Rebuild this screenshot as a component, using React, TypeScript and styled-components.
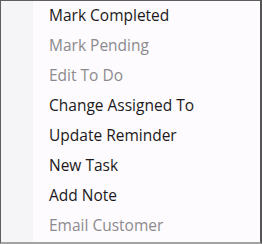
import React from "react";
import styled, { createGlobalStyle } from "styled-components";

const Global = createGlobalStyle`
  html, body { margin: 0; padding: 0; background: #ffffff; }
  body { font-family: "Open Sans", "Noto Sans", sans-serif; }
`;

const Menu = styled.div`
  box-sizing: border-box;
  width: 262px;
  height: 244px;
  display: grid;
  grid-template-columns: 32px 1fr;
  border-top: 1px solid #5e5e5e;
  border-left: 1px solid #5e5e5e;
  border-right: 2px solid #555555;
  border-bottom: 2px solid #a3a3a3;
  background: #fdfbfd;
  overflow: hidden;
`;

const Gutter = styled.div`
  background: #f5f4f6;
`;

const List = styled.ul`
  list-style: none;
  margin: -1px 0 0 0;
  padding: 0 0 0 16px;
  display: flex;
  flex-direction: column;
`;

const Item = styled.li<{ $disabled?: boolean }>`
  height: 30px;
  line-height: 30px;
  font-size: 15.5px;
  font-weight: 500;
  white-space: nowrap;
  color: ${(p) => (p.$disabled ? "#8b8a8d" : "#1c1a20")};
`;

const items: { label: string; disabled?: boolean }[] = [
  { label: "Mark Completed" },
  { label: "Mark Pending", disabled: true },
  { label: "Edit To Do", disabled: true },
  { label: "Change Assigned To" },
  { label: "Update Reminder" },
  { label: "New Task" },
  { label: "Add Note" },
  { label: "Email Customer", disabled: true },
];

export default function App() {
  return (
    <>
      <Global />
      <Menu>
        <Gutter />
        <List>
          {items.map((it) => (
            <Item key={it.label} $disabled={it.disabled}>
              {it.label}
            </Item>
          ))}
        </List>
      </Menu>
    </>
  );
}
